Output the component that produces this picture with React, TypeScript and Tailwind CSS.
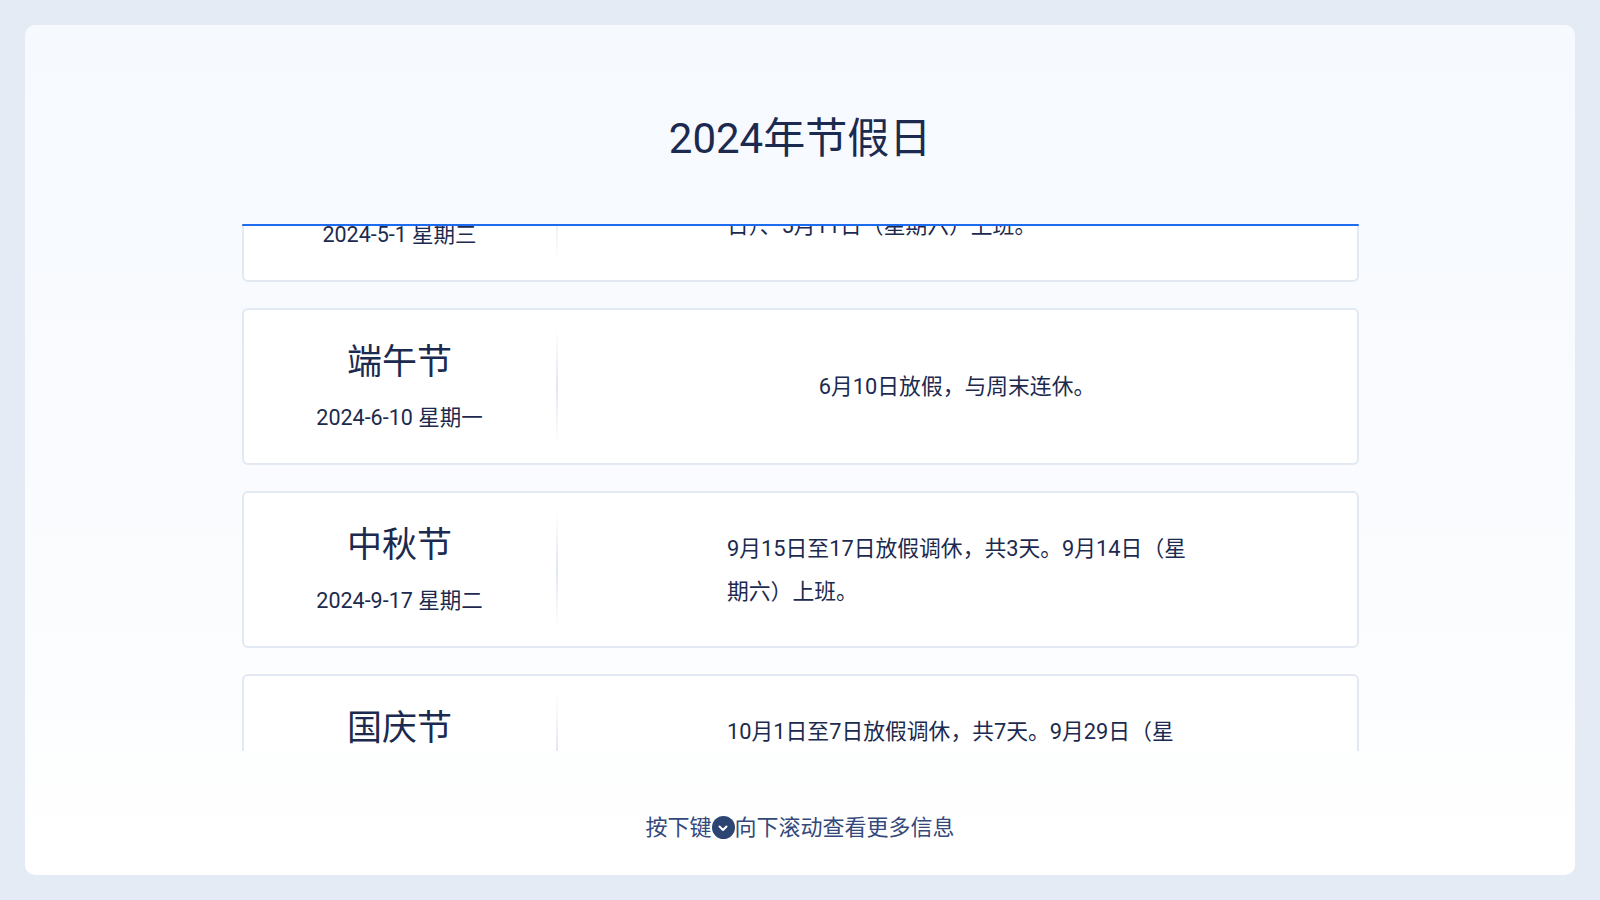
import React from "react";

type Holiday = { name: string; date: string; desc: string };

const holidays: Holiday[] = [
  { name: "劳动节", date: "2024-5-1 星期三", desc: "5月1日至5日放假调休，共5天。4月28日（星期日）、5月11日（星期六）上班。" },
  { name: "端午节", date: "2024-6-10 星期一", desc: "6月10日放假，与周末连休。" },
  { name: "中秋节", date: "2024-9-17 星期二", desc: "9月15日至17日放假调休，共3天。9月14日（星期六）上班。" },
  { name: "国庆节", date: "2024-10-1 星期二", desc: "10月1日至7日放假调休，共7天。9月29日（星期日）、10月12日（星期六）上班。" },
];

export default function App() {
  return (
    <div
      className="flex h-[900px] w-[1600px] bg-[#e4ebf5] p-[25px] text-[#1b2a4e]"
      style={{ fontFamily: "Roboto, 'Noto Sans CJK SC', sans-serif" }}
    >
      <div className="flex flex-1 flex-col items-center rounded-[10px] bg-gradient-to-b from-[#f6f9fe] via-[#f9fbfe] to-white">
        <h1 className="mt-[88px] text-[42px] leading-[52px] font-normal">2024年节假日</h1>
        <div className="relative mt-[59px] h-[527px] w-[1117px] overflow-hidden">
          <div className="absolute left-0 right-0 top-0 z-10 h-[2px] rounded-full bg-[#1d6cf0]" />
          <div className="-mt-[99px] flex flex-col gap-[26px]">
            {holidays.map((h) => (
              <Card key={h.name} h={h} />
            ))}
          </div>
        </div>
        <div className="mt-[60px] flex items-center text-[22px] text-[#34497a]">
          按下键
          <span className="inline-flex h-[23px] w-[23px] items-center justify-center rounded-full bg-[#2d4573]">
            <svg width="12" height="12" viewBox="0 0 24 24" fill="none" stroke="white" strokeWidth="4" strokeLinecap="round" strokeLinejoin="round">
              <path d="M5 9l7 7 7-7" />
            </svg>
          </span>
          向下滚动查看更多信息
        </div>
      </div>
    </div>
  );
}

function Card({ h }: { h: Holiday }) {
  return (
    <div className="flex h-[157px] shrink-0 rounded-[6px] border-2 border-[#e3e9f2] bg-white">
      <div className="flex w-[312px] flex-col items-center justify-center gap-[22px]">
        <div className="text-[35px] leading-[40px]">{h.name}</div>
        <div className="text-[21.5px] leading-[26px]">{h.date}</div>
      </div>
      <div className="my-[18px] w-[2px] bg-gradient-to-b from-transparent via-[#e1e7f1] to-transparent" />
      <div className="flex flex-1 items-center justify-center">
        <p className="max-w-[460px] text-left text-[21.8px] leading-[43px]">{h.desc}</p>
      </div>
    </div>
  );
}
